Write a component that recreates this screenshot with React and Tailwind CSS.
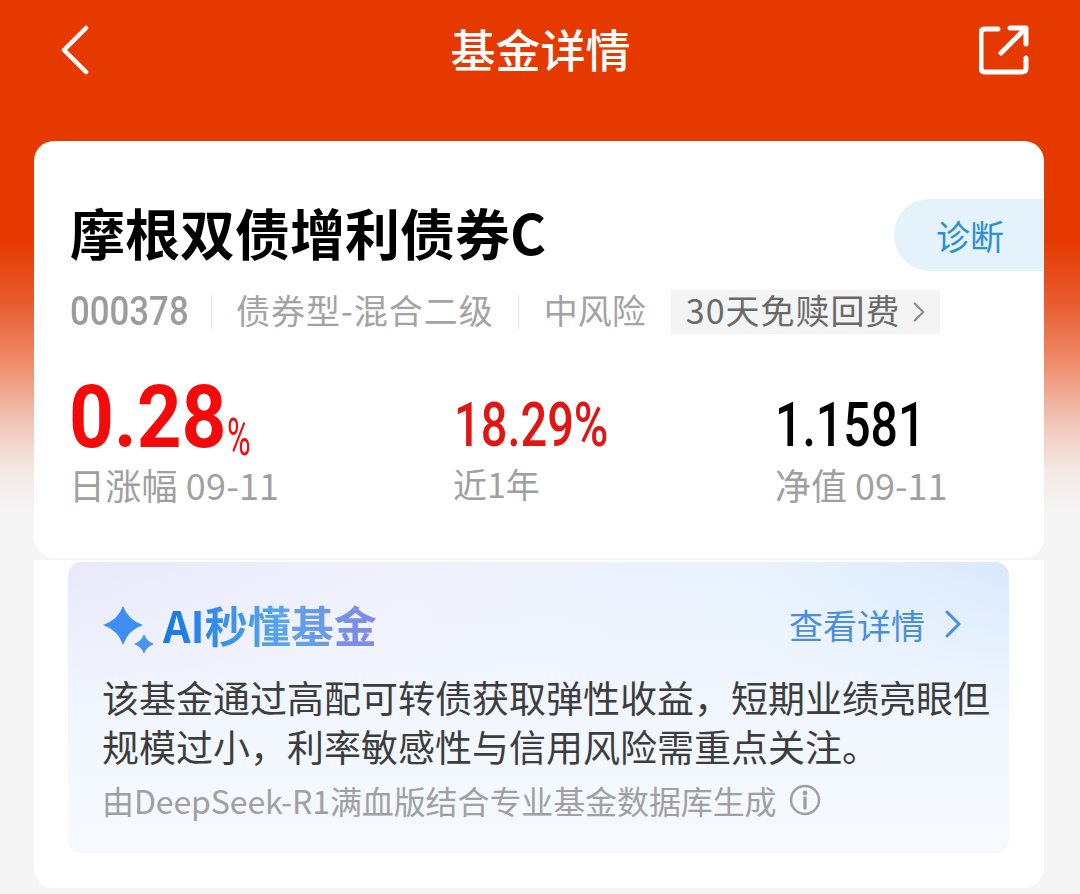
const cjk = { fontFamily: '"Noto Sans CJK SC", "Noto Sans", sans-serif' };
const num = { fontFamily: '"Roboto", "Noto Sans CJK SC", sans-serif' };

function Back() {
  return (
    <svg width="30" height="50" viewBox="0 0 30 50" fill="none" stroke="#fff" strokeWidth="4.5" strokeLinecap="round" strokeLinejoin="round">
      <path d="M26 3 L4 25 L26 47" />
    </svg>
  );
}
function Share() {
  return (
    <svg width="50" height="50" viewBox="0 0 50 50" fill="none" stroke="#fff" strokeWidth="5" strokeLinecap="round" strokeLinejoin="round">
      <path d="M19 4 H6 Q2 4 2 8 V43 Q2 47 6 47 H43 Q47 47 47 43 V33" />
      <path d="M22 28 L46 4" />
      <path d="M31 3 H47 V19" />
    </svg>
  );
}
function Sparkle() {
  return (
    <svg className="translate-y-[6px]" width="54" height="50" viewBox="0 0 54 50">
      <path d="M20 1 Q25 15 40 20 Q25 25 20 40 Q15 25 0 20 Q15 15 20 1 Z" fill="#3d8ff5" />
      <path d="M41 29 Q43 36 51 39 Q43 42 41 49 Q39 42 31 39 Q39 36 41 29 Z" fill="#4a93ef" />
    </svg>
  );
}

function Stat({ value, label, color, className, labelClass, scale }) {
  return (
    <div className={className}>
      <div className={`h-[66px] flex items-end text-[61px] font-medium leading-[54px] -mb-[9px] relative top-[8px] ${color}`} style={num}>
        <span className={`inline-block origin-left whitespace-nowrap ${scale}`}>{value}</span>
      </div>
      <div className={`mt-[24px] leading-[50px] text-[#a0a0a0] ${labelClass}`} style={cjk}>{label}</div>
    </div>
  );
}

export default function App() {
  return (
    <div className="h-[894px] w-[1080px] overflow-hidden bg-[linear-gradient(180deg,#e63900_0px,#e63900_240px,#e85a2e_300px,#ee8a68_360px,#f0c4b4_420px,#f3e8e4_470px,#f5f5f5_510px)] flex flex-col" style={cjk}>
      <header className="h-[100px] shrink-0 grid grid-cols-[1fr_auto_1fr] items-center pl-[60px] pr-[51px] mb-[41px]">
        <div className="justify-self-start"><Back /></div>
        <h1 className="text-[45px] font-medium text-white leading-none -mt-[4px] -translate-x-[4px]">基金详情</h1>
        <div className="justify-self-end"><Share /></div>
      </header>

      <section className="relative ml-[34px] w-[1010px] h-[417px] shrink-0 bg-white rounded-[20px] px-[36px] pt-[57px]">
        <h2 className="text-[55px] leading-[66px] font-bold text-black">摩根双债增利债券C</h2>
        <div className="absolute right-0 top-[58px] w-[150px] h-[72px] rounded-l-[36px] bg-[#e3f2fb] flex items-center pl-[42px] text-[34px] text-[#2e8fd3]">诊断</div>

        <div className="mt-[26px] flex items-center h-[44px] text-[34px] text-[#a3a3a3]">
          <span className="w-[117px] text-[40px] font-medium text-[#9c9c9c]" style={num}>
            <span className="inline-block origin-left scale-x-[0.87]">000378</span>
          </span>
          <span className="w-px h-[34px] bg-[#e3e3e3] ml-[24px] mr-[24px]"></span>
          <span className="tracking-[1px] -translate-y-[3px]">债券型-混合二级</span>
          <span className="w-px h-[34px] bg-[#e3e3e3] ml-[24px] mr-[25px]"></span>
          <span className="-translate-y-[3px]">中风险</span>
          <span className="ml-[25px] h-[44px] w-[269px] bg-[#f4f4f4] flex items-center pl-[15px] text-[#6a6a6a] tracking-[1px]">
            <span className="-translate-y-[3px]">30天免赎回费</span>
            <svg className="ml-[12px]" width="12" height="22" viewBox="0 0 14 24" fill="none" stroke="#8a8a8a" strokeWidth="2.5" strokeLinecap="round" strokeLinejoin="round"><path d="M2 2 L12 12 L2 22" /></svg>
          </span>
        </div>

        <div className="mt-[44px] flex">
          <div className="w-[384px] -ml-[1px]">
            <div className="h-[66px] flex items-end font-bold text-[#f40a0a]" style={num}>
              <span className="w-[158px] text-[88px] leading-[62px] whitespace-nowrap relative top-[4px]"><span className="inline-block origin-left scale-x-[0.89]">0.28</span></span>
              <span className="w-[24px] text-[52px] leading-[36px] font-normal relative top-[12px]"><span className="inline-block origin-left scale-x-[0.62]">%</span></span>
            </div>
            <div className="mt-[15px] text-[36px] tracking-[0.2px] leading-[50px] text-[#a0a0a0]">日涨幅 09-11</div>
          </div>
          <Stat className="w-[322px]" value="18.29%" label="近1年" color="text-[#e01515]" labelClass="text-[34px]" scale="scale-x-[0.77] translate-x-[1px]" />
          <Stat value="1.1581" label="净值 09-11" color="text-black" labelClass="text-[36px]" scale="scale-x-[0.79]" />
        </div>
      </section>

      <section className="ml-[34px] w-[1010px] mt-[2px] h-[328px] shrink-0 bg-white rounded-b-[20px] pl-[34px] pr-[35px] pt-[2px]">
        <div className="h-[291px] rounded-[14px] bg-[linear-gradient(180deg,#f2f7ff00_0%,#f2f7ff_55%,#f6faff_100%),linear-gradient(100deg,#e9e8fa_0%,#f0f1fd_35%,#e8f2fe_70%,#d6e7fc_100%)] pl-[34px] pr-[10px] pt-[37px]">
          <div className="flex items-center justify-between h-[50px]">
            <div className="flex items-center ml-[1px]">
              <Sparkle />
              <span className="ml-[6px] text-[43px] font-bold bg-[linear-gradient(90deg,#1877e6,#5aa6ea_55%,#8488e6)] bg-clip-text text-transparent">AI秒懂基金</span>
            </div>
            <div className="flex items-center pr-[38px] text-[34px] text-[#4a8fd8]">
              查看详情
              <svg className="ml-[20px]" width="16" height="28" viewBox="0 0 16 28" fill="none" stroke="#4a8fd8" strokeWidth="3" strokeLinecap="round" strokeLinejoin="round"><path d="M2 2 L14 14 L2 26" /></svg>
            </div>
          </div>
          <p className="mt-[24px] text-[37px] leading-[49px] text-[#3d3d3d]">
            该基金通过高配可转债获取弹性收益，短期业绩亮眼但<br />规模过小，利率敏感性与信用风险需重点关注。
          </p>
          <div className="mt-[6px] flex items-center text-[32px] tracking-[-0.1px] leading-[46px] text-[#a0a0a0]">
            由DeepSeek-R1满血版结合专业基金数据库生成
            <svg className="ml-[12px]" width="32" height="32" viewBox="0 0 32 32" fill="none" stroke="#a0a0a0" strokeWidth="2.5" strokeLinecap="round"><circle cx="16" cy="16" r="14" /><path d="M16 14 V24" strokeWidth="3.5" /><circle cx="16" cy="9" r="1.2" fill="#a0a0a0" /></svg>
          </div>
        </div>
      </section>
    </div>
  );
}
